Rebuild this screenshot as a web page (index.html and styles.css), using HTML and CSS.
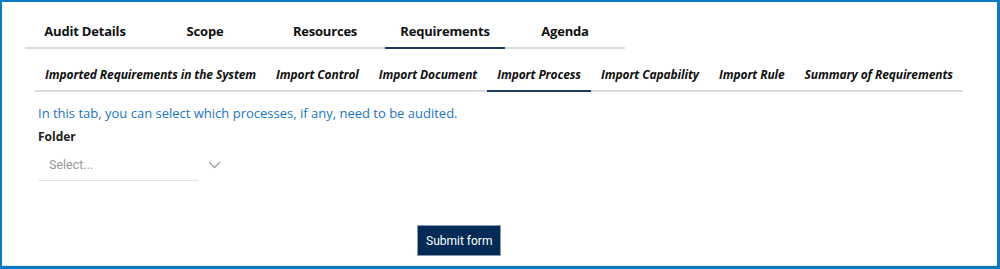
FILE: index.html
```html
<!DOCTYPE html>
<html lang="en">
<head>
    <meta charset="UTF-8">
    <meta name="viewport" content="width=device-width, initial-scale=1.0">
    <title>Audit - Requirements</title>
    <link rel="stylesheet" href="styles.css">
</head>
<body>

    <div class="frame">
        <div class="main-tabs">
            <div class="main-tab">Audit Details</div>
            <div class="main-tab">Scope</div>
            <div class="main-tab">Resources</div>
            <div class="main-tab active">Requirements</div>
            <div class="main-tab">Agenda</div>
        </div>

        <div class="sub-tabs">
            <div class="sub-tab">Imported Requirements in the System</div>
            <div class="sub-tab">Import Control</div>
            <div class="sub-tab">Import Document</div>
            <div class="sub-tab active">Import Process</div>
            <div class="sub-tab">Import Capability</div>
            <div class="sub-tab">Import Rule</div>
            <div class="sub-tab">Summary of Requirements</div>
        </div>

        <div class="tab-body">
            <p class="hint">In this tab, you can select which processes, if any, need to be audited.</p>
            <label class="field-label">Folder</label>
            <div class="select">
                <div class="select-value">Select...</div>
                <svg class="chevron" width="13" height="8" viewBox="0 0 13 8">
                    <path d="M1 1 L6.5 6.5 L12 1" fill="none" stroke="#a0a0a0" stroke-width="1.3"/>
                </svg>
            </div>
        </div>

        <div class="actions">
            <button class="submit">Submit form</button>
        </div>
    </div>

</body>
</html>
```

FILE: styles.css
```css
* {
    box-sizing: border-box;
}

body {
    margin: 0;
    background: #fff;
    font-family: "Open Sans", "Noto Sans", sans-serif;
}

.frame {
    height: 269px;
    border: 2px solid #0a7bc4;
    border-right-width: 3px;
    border-bottom-width: 3px;
    box-shadow: inset 0 -1px 0 #e3e8ea;
    overflow: hidden;
}

/* top tabs */
.main-tabs {
    display: flex;
    width: 600px;
    margin: 13px 0 0 23px;
    box-shadow: inset 0 -2px 0 #dcdcdc;
}

.main-tab {
    width: 120px;
    height: 34px;
    line-height: 32px;
    border-bottom: 2px solid transparent;
    text-align: center;
    font-size: 13px;
    font-weight: 700;
    letter-spacing: -0.2px;
    color: #111;
}

.main-tab.active {
    border-bottom-color: #1d3c66;
}

/* second level tabs */
.sub-tabs {
    display: flex;
    width: 928px;
    margin: 11px 0 0 33px;
    box-shadow: inset 0 -2px 0 #dcdcdc;
}

.sub-tab {
    height: 32px;
    line-height: 30px;
    padding: 0 10px;
    border-bottom: 2px solid transparent;
    font-size: 12px;
    font-weight: 700;
    font-style: italic;
    letter-spacing: -0.1px;
    color: #111;
    white-space: nowrap;
}

.sub-tab.active {
    border-bottom-color: #1d3c66;
}

.tab-body {
    padding: 11px 0 0 36px;
}

.hint {
    margin: 0;
    line-height: 20px;
    font-size: 13px;
    color: #1a75c2;
}

.field-label {
    display: block;
    margin-top: 5px;
    line-height: 18px;
    font-size: 12px;
    font-weight: 700;
    color: #222;
}

.select {
    display: flex;
    align-items: center;
    margin-top: 4px;
}

.select-value {
    width: 160px;
    height: 31px;
    line-height: 30px;
    padding-left: 11px;
    border-bottom: 1px solid #e2e2e2;
    font-family: Roboto, "Liberation Sans", sans-serif;
    font-size: 12.5px;
    color: #9a9a9a;
}

.chevron {
    margin: -2px 0 0 10px;
}

.actions {
    padding: 44px 0 0 415px;
}

.submit {
    height: 31px;
    padding: 0 8px;
    background: #032b55;
    border: 1px solid #8a9bb0;
    color: #fff;
    font-family: Roboto, "Liberation Sans", sans-serif;
    font-size: 12px;
    white-space: nowrap;
    cursor: pointer;
}
```
